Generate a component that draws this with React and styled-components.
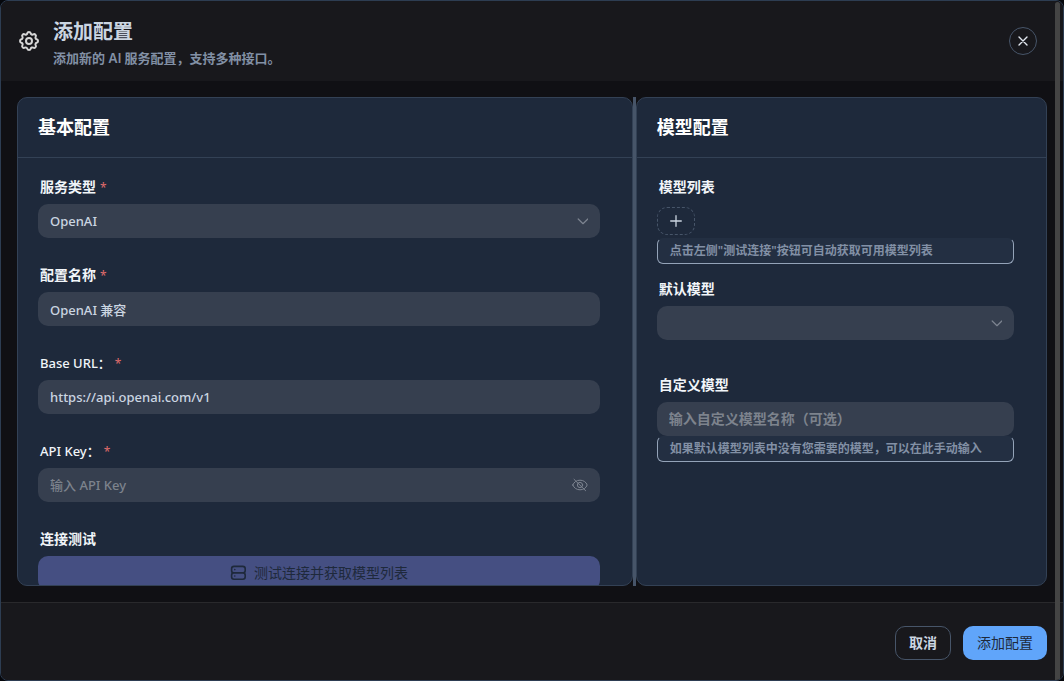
import React from "react";
import styled, { createGlobalStyle } from "styled-components";

const GlobalStyle = createGlobalStyle`
  *, *::before, *::after { box-sizing: border-box; }
  body { margin: 0; background: #05070c; }
  body, button, input, select {
    font-family: "Noto Sans", "Noto Sans CJK SC", sans-serif;
    font-size: 14px;
    font-weight: 500;
  }
`;

const Dialog = styled.main`
  position: relative;
  display: flex;
  flex-direction: column;
  height: 100vh;
  border: 1px solid #2d3d52;
  border-radius: 8px;
  background: #101014;
  overflow: hidden;
`;

const ScrollThumb = styled.div`
  position: absolute;
  top: 1px;
  right: 3px;
  bottom: 0;
  width: 5px;
  border-radius: 5px 5px 0 0;
  background: #444444;
`;

const Header = styled.header`
  display: flex;
  align-items: center;
  gap: 12px;
  height: 80px;
  flex: none;
  padding: 0 26px 0 16px;
  background: #18181c;
  color: #d6d6d6;
`;

const Heading = styled.div`
  flex: 1;
  display: flex;
  flex-direction: column;
  gap: 2px;
  padding-top: 4px;
`;

const Title = styled.h1`
  margin: 0;
  font-size: 20px;
  line-height: 28px;
  font-weight: 700;
  color: #cbd5e1;
`;

const Subtitle = styled.p`
  margin: 0;
  font-family: Inter, "Noto Sans CJK SC", sans-serif;
  font-size: 13px;
  line-height: 20px;
  font-weight: 600;
  color: #8290a5;
`;

const CloseButton = styled.button`
  display: grid;
  place-items: center;
  width: 28px;
  height: 28px;
  padding: 0;
  border: 1px solid #475569;
  border-radius: 50%;
  background: transparent;
  color: #e2e8f0;
`;

const Body = styled.div`
  flex: 1;
  min-height: 0;
  display: flex;
  padding: 16px;
`;

const Divider = styled.div`
  flex: none;
  width: 3px;
  background: #475569;
`;

const Panel = styled.section`
  flex: ${({ $grow }) => $grow} 1 0;
  min-width: 0;
  display: flex;
  flex-direction: column;
  border: 1px solid #334155;
  border-radius: 10px;
  background: #1e293b;
  overflow: hidden;
`;

const PanelTitle = styled.h2`
  flex: none;
  margin: 0;
  padding: 16px 20px;
  border-bottom: 1px solid #334155;
  font-size: 18px;
  line-height: 27px;
  font-weight: 700;
  color: #ffffff;
`;

const PanelForm = styled.div`
  flex: 1;
  min-height: 0;
  padding: 20px 32px 0 20px;
  overflow-y: auto;
  scrollbar-width: none;
`;

const Field = styled.div`
  display: flex;
  flex-direction: column;
  margin-bottom: ${({ $gap = 28 }) => $gap}px;
`;

const Label = styled.label`
  height: 26px;
  padding: 0 2px;
  font-size: ${({ $latin }) => ($latin ? 13 : 14)}px;
  line-height: 18px;
  font-weight: ${({ $latin }) => ($latin ? 500 : 600)};
  color: #f1f5f9;
`;

const Required = styled.span`
  margin-left: 4px;
  font-size: 12px;
  line-height: 12px;
  font-weight: 400;
  color: #e06c6c;
`;

const Control = styled.div`
  display: flex;
  align-items: center;
  height: 34px;
  padding-right: 12px;
  border-radius: 10px;
  background: #363f4f;
  color: #7d8490;
`;

const controlText = `
  flex: 1;
  min-width: 0;
  height: 34px;
  border: 0;
  outline: 0;
  background: transparent;
  font-size: 13px;
  color: #cbd5e1;
`;

const TextInput = styled.input`
  ${controlText}
  padding: 0 12px;
  &::placeholder { color: #7d838d; opacity: 1; }
`;

const ModelInput = styled(TextInput)`
  padding-bottom: 2px;
  font-size: 14px;
  font-weight: 600;
`;

const Select = styled.select`
  ${controlText}
  appearance: none;
  padding: 0 12px;
`;

const IconButton = styled.button`
  display: grid;
  place-items: center;
  padding: 0;
  border: 0;
  background: transparent;
  color: #7d8490;
`;

const AddButton = styled.button`
  display: grid;
  place-items: center;
  width: 38px;
  height: 28px;
  margin: 3px 0;
  padding: 0;
  border: 1px dashed #475569;
  border-radius: 10px;
  background: transparent;
  color: #cbd5e1;
`;

const Hint = styled.p`
  margin: 0;
  padding: 0 12px;
  height: 26px;
  border: 1px solid #94a3b8;
  border-top-color: transparent;
  border-radius: 6px;
  background: #232f42;
  font-size: 12px;
  line-height: 24px;
  font-weight: 600;
  color: #8290a5;
`;

const TestButton = styled.button`
  display: flex;
  align-items: center;
  justify-content: center;
  gap: 8px;
  flex: none;
  height: 34px;
  padding: 0 0 2px;
  border: 0;
  border-radius: 10px;
  background: #454f82;
  font-weight: 400;
  color: #1e293b;
`;

const Footer = styled.footer`
  flex: none;
  display: flex;
  justify-content: flex-end;
  align-items: center;
  gap: 12px;
  padding: 23px 16px 20px;
  border-top: 1px solid #29292c;
  background: #18181c;
`;

const Button = styled.button`
  height: 34px;
  padding: 0 ${({ $primary }) => ($primary ? 14 : 13)}px 2px;
  border: ${({ $primary }) => ($primary ? "0" : "1px solid #475569")};
  border-radius: 10px;
  background: ${({ $primary }) => ($primary ? "#60a5fa" : "transparent")};
  font-weight: ${({ $primary }) => ($primary ? 400 : 600)};
  color: ${({ $primary }) => ($primary ? "#1e293b" : "#cbd5e1")};
`;

const GearIcon = () => (
  <svg width="24" height="24" viewBox="0 0 24 24" fill="none" stroke="currentColor" strokeWidth="2" strokeLinejoin="round" aria-hidden="true">
    <path d="M10.3 4.3c.4-1.7 2.9-1.7 3.4 0a1.7 1.7 0 0 0 2.6 1.1c1.5-.9 3.3.8 2.4 2.4a1.7 1.7 0 0 0 1 2.5c1.8.5 1.8 3 0 3.4a1.7 1.7 0 0 0-1 2.6c.9 1.5-.9 3.3-2.4 2.4a1.7 1.7 0 0 0-2.6 1c-.4 1.8-2.9 1.8-3.4 0a1.7 1.7 0 0 0-2.5-1c-1.6.9-3.3-.9-2.4-2.4a1.7 1.7 0 0 0-1.1-2.6c-1.7-.4-1.7-2.9 0-3.4a1.7 1.7 0 0 0 1.1-2.5c-.9-1.6.8-3.3 2.4-2.4a1.7 1.7 0 0 0 2.5-1.1z" />
    <circle cx="12" cy="12" r="3" />
  </svg>
);

const CloseIcon = () => (
  <svg width="12" height="12" viewBox="0 0 12 12" fill="none" stroke="currentColor" strokeWidth="1.4" strokeLinecap="round" aria-hidden="true">
    <path d="M2 2l8 8M10 2l-8 8" />
  </svg>
);

const ChevronIcon = () => (
  <svg width="12" height="12" viewBox="0 0 12 12" fill="none" stroke="currentColor" strokeWidth="1.2" strokeLinecap="round" strokeLinejoin="round" aria-hidden="true">
    <path d="M2.200 4L7 8.700L11.800 4" />
  </svg>
);

const PlusIcon = () => (
  <svg width="14" height="14" viewBox="0 0 14 14" fill="none" stroke="currentColor" strokeWidth="1.3" strokeLinecap="round" aria-hidden="true">
    <path d="M7 1.700v10.600M1.700 7h10.600" />
  </svg>
);

const EyeOffIcon = () => (
  <svg width="16" height="16" viewBox="0 0 16 16" fill="none" stroke="currentColor" strokeWidth="1" strokeLinecap="round" aria-hidden="true">
    <path d="M.8 8c1-3 3.900-4.800 7.200-4.800S14.200 5 15.200 8c-1 3-3.900 4.800-7.200 4.800S1.800 11 .8 8z" />
    <circle cx="8" cy="8" r="2.600" />
    <path d="M2 2.300l11.600 11.400" />
  </svg>
);

const ServerIcon = () => (
  <svg width="16" height="16" viewBox="1 1 20 20" fill="none" stroke="currentColor" strokeWidth="2" strokeLinecap="round" aria-hidden="true">
    <rect x="3" y="4" width="17" height="8" rx="3" />
    <rect x="3" y="12" width="17" height="8" rx="3" />
    <path d="M7 8v.01M7 16v.01" />
  </svg>
);

export default function App() {
  return (
    <>
      <GlobalStyle />
      <Dialog>
        <Header>
          <GearIcon />
          <Heading>
            <Title>添加配置</Title>
            <Subtitle>添加新的 AI 服务配置，支持多种接口。</Subtitle>
          </Heading>
          <CloseButton type="button" aria-label="关闭"><CloseIcon /></CloseButton>
        </Header>
        <Body>
          <Panel $grow={3}>
            <PanelTitle>基本配置</PanelTitle>
            <PanelForm>
              <Field>
                <Label htmlFor="service">服务类型<Required>*</Required></Label>
                <Control>
                  <Select id="service" defaultValue="openai"><option value="openai">OpenAI</option></Select>
                  <ChevronIcon />
                </Control>
              </Field>
              <Field>
                <Label htmlFor="name">配置名称<Required>*</Required></Label>
                <Control><TextInput id="name" defaultValue="OpenAI 兼容" /></Control>
              </Field>
              <Field>
                <Label $latin htmlFor="url">Base URL：<Required>*</Required></Label>
                <Control><TextInput id="url" defaultValue="https://api.openai.com/v1" /></Control>
              </Field>
              <Field>
                <Label $latin htmlFor="key">API Key：<Required>*</Required></Label>
                <Control>
                  <TextInput id="key" type="password" placeholder="输入 API Key" />
                  <IconButton type="button" aria-label="显示密钥"><EyeOffIcon /></IconButton>
                </Control>
              </Field>
              <Field>
                <Label as="div">连接测试</Label>
                <TestButton type="button"><ServerIcon />测试连接并获取模型列表</TestButton>
              </Field>
            </PanelForm>
          </Panel>
          <Divider />
          <Panel $grow={2}>
            <PanelTitle>模型配置</PanelTitle>
            <PanelForm>
              <Field $gap={16}>
                <Label as="div">模型列表</Label>
                <AddButton type="button" aria-label="添加模型"><PlusIcon /></AddButton>
                <Hint>点击左侧"测试连接"按钮可自动获取可用模型列表</Hint>
              </Field>
              <Field $gap={36}>
                <Label htmlFor="model">默认模型</Label>
                <Control>
                  <Select id="model" />
                  <ChevronIcon />
                </Control>
              </Field>
              <Field>
                <Label htmlFor="custom">自定义模型</Label>
                <Control><ModelInput id="custom" placeholder="输入自定义模型名称（可选）" /></Control>
                <Hint>如果默认模型列表中没有您需要的模型，可以在此手动输入</Hint>
              </Field>
            </PanelForm>
          </Panel>
        </Body>
        <Footer>
          <Button type="button">取消</Button>
          <Button type="button" $primary>添加配置</Button>
        </Footer>
        <ScrollThumb />
      </Dialog>
    </>
  );
}
